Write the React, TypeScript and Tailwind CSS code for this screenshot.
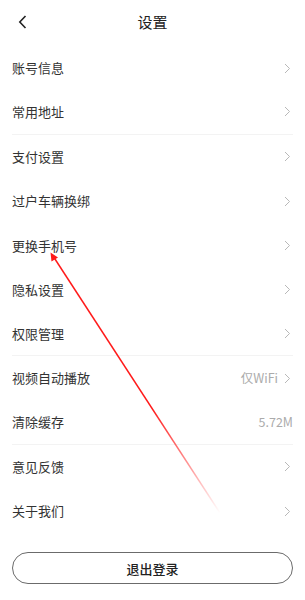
import { ReactNode } from 'react'

interface SettingItem {
  label: string
  value?: string
  arrow?: boolean
  divider?: boolean
}

const items: SettingItem[] = [
  { label: '账号信息', arrow: true },
  { label: '常用地址', arrow: true, divider: true },
  { label: '支付设置', arrow: true },
  { label: '过户车辆换绑', arrow: true },
  { label: '更换手机号', arrow: true },
  { label: '隐私设置', arrow: true },
  { label: '权限管理', arrow: true, divider: true },
  { label: '视频自动播放', value: '仅WiFi', arrow: true },
  { label: '清除缓存', value: '5.72M', divider: true },
  { label: '意见反馈', arrow: true },
  { label: '关于我们', arrow: true },
]

function ChevronRight() {
  return (
    <svg width="7" height="11" viewBox="0 0 7 11" fill="none" className="ml-[6px] mr-[2px]">
      <path d="M1 1l4.5 4.5L1 10" stroke="#b8b8b8" strokeWidth="1" />
    </svg>
  )
}

function Row({ item }: { item: SettingItem }): ReactNode {
  return (
    <div
      className={`h-[44.3px] flex items-center justify-between ${
        item.divider ? 'border-b border-[#f3f3f3]' : ''
      }`}
    >
      <span className="text-[13px] text-[#333]">{item.label}</span>
      <div className="flex items-center">
        {item.value && <span className="text-[12.5px] text-[#ababab]">{item.value}</span>}
        {item.arrow && <ChevronRight />}
      </div>
    </div>
  )
}

export default function App() {
  return (
    <div
      className="relative w-[305px] h-[600px] bg-white overflow-hidden"
      style={{ fontFamily: '"Noto Sans CJK SC", "Noto Sans", sans-serif' }}
    >
      <header className="relative h-[46px] flex items-center justify-center">
        <svg width="9" height="14" viewBox="0 0 9 14" fill="none" className="absolute left-[18px] top-[15px]">
          <path d="M7.5 1L1.8 7l5.7 6" stroke="#222" strokeWidth="1.6" />
        </svg>
        <span className="text-[15px] text-[#222] -mt-[2px]">设置</span>
      </header>

      <div className="px-3">
        {items.map((item) => (
          <Row key={item.label} item={item} />
        ))}
      </div>

      <div className="px-3 mt-[19px]">
        <button className="w-full h-[32px] rounded-full border border-[#6b6b6b] text-[13px] text-[#222] font-medium">
          退出登录
        </button>
      </div>

      <svg className="absolute left-0 top-0 pointer-events-none" width="305" height="600" viewBox="0 0 305 600">
        <defs>
          <linearGradient id="arrowFade" x1="51" y1="253" x2="220" y2="513" gradientUnits="userSpaceOnUse">
            <stop offset="0" stopColor="#ff1a1a" />
            <stop offset="0.6" stopColor="#ff1a1a" />
            <stop offset="1" stopColor="#ff1a1a" stopOpacity="0" />
          </linearGradient>
        </defs>
        <line x1="53" y1="256" x2="220" y2="513" stroke="url(#arrowFade)" strokeWidth="1.5" />
        <path d="M50.5 252.5L51.5 261.5L58 257.5Z" fill="#ff1a1a" />
      </svg>
    </div>
  )
}
